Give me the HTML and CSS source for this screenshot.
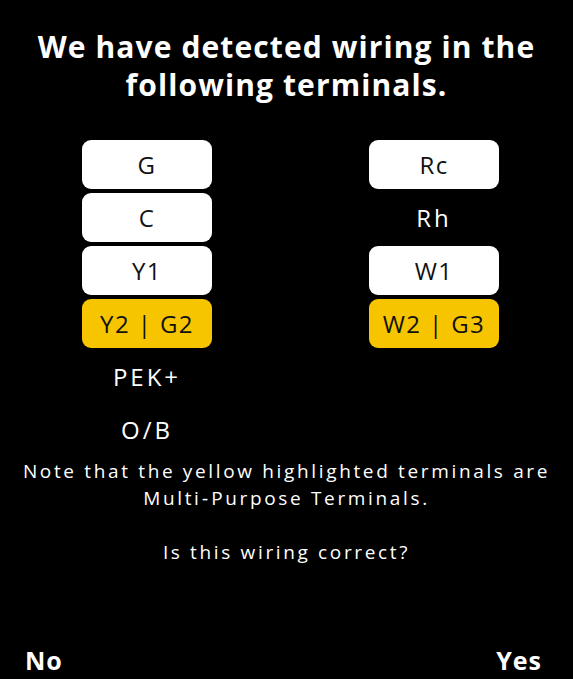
FILE: index.html
```html
<!DOCTYPE html>
<html>
<head>
<meta charset="utf-8">
<link rel="stylesheet" href="styles.css">
</head>
<body>
<div class="screen">
  <h1 class="title">We have detected wiring in the following terminals.</h1>
  <div class="columns">
    <div class="col">
      <div class="term on">G</div>
      <div class="term on">C</div>
      <div class="term on">Y1</div>
      <div class="term multi">Y2 | G2</div>
      <div class="term plain">PEK+</div>
      <div class="term plain">O/B</div>
    </div>
    <div class="col">
      <div class="term on">Rc</div>
      <div class="term plain">Rh</div>
      <div class="term on">W1</div>
      <div class="term multi">W2 | G3</div>
    </div>
  </div>
  <p class="note">Note that the yellow highlighted terminals are Multi&#8209;Purpose Terminals.</p>
  <p class="note question">Is this wiring correct?</p>
  <div class="actions">
    <span class="action">No</span>
    <span class="action">Yes</span>
  </div>
</div>
</body>
</html>
```
FILE: styles.css
```css
html, body {
  margin: 0;
  padding: 0;
  background: #000;
}
.screen {
  width: 573px;
  height: 679px;
  box-sizing: border-box;
  display: flex;
  flex-direction: column;
  color: #fff;
  font-family: "Open Sans", Lato, sans-serif;
}
.title {
  margin: 28px 10px 0;
  font-size: 30px;
  font-weight: 700;
  line-height: 38px;
  text-align: center;
  letter-spacing: 1.1px;
}
.columns {
  display: flex;
  gap: 157px;
  padding-left: 82px;
  margin-top: 36px;
}
.col {
  display: flex;
  flex-direction: column;
  gap: 4px;
  width: 130px;
}
.term {
  height: 49px;
  border-radius: 9px;
  display: flex;
  align-items: center;
  justify-content: center;
  font-size: 24px;
  color: #fff;
  letter-spacing: 1.4px;
}
.term.plain {
  letter-spacing: 3px;
}
.term.on {
  background: #fff;
  color: #111;
}
.term.multi {
  background: #f6c500;
  color: #111;
}
.note {
  margin: 4px 4px 0;
  font-size: 19px;
  line-height: 27px;
  text-align: center;
  letter-spacing: 2.65px;
}
.question {
  margin-top: 27px;
}
.actions {
  margin-top: auto;
  display: flex;
  justify-content: space-between;
  padding: 0 31px 4px 25px;
  font-size: 25px;
  font-weight: 700;
  line-height: 30px;
  letter-spacing: 1px;
}
```
